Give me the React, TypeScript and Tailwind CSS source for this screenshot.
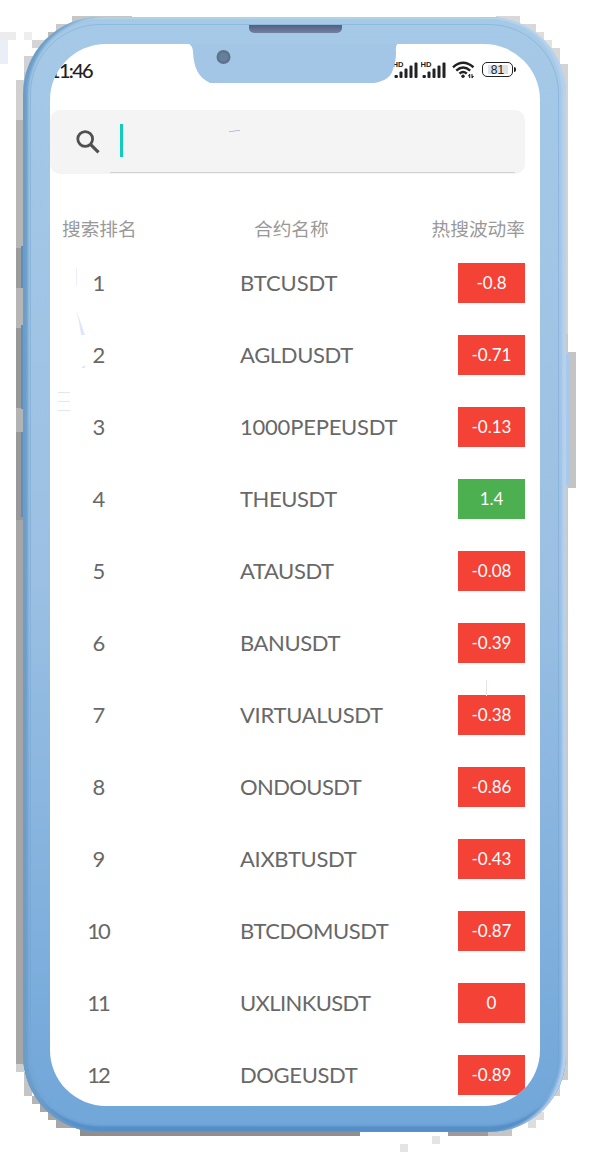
const rows = [
  { name: 'BTCUSDT', rate: '-0.8', track: 'tracking-[-0.1px]' },
  { name: 'AGLDUSDT', rate: '-0.71', track: 'tracking-[-0.36px]' },
  { name: '1000PEPEUSDT', rate: '-0.13', track: 'tracking-[-0.22px]' },
  { name: 'THEUSDT', rate: '1.4', track: 'tracking-[-0.4px]' },
  { name: 'ATAUSDT', rate: '-0.08', track: 'tracking-[-0.4px]' },
  { name: 'BANUSDT', rate: '-0.39', track: 'tracking-[-0.4px]' },
  { name: 'VIRTUALUSDT', rate: '-0.38', track: 'tracking-[-0.28px]' },
  { name: 'ONDOUSDT', rate: '-0.86', track: 'tracking-[-0.6px]' },
  { name: 'AIXBTUSDT', rate: '-0.43', track: 'tracking-[-0.33px]' },
  { name: 'BTCDOMUSDT', rate: '-0.87', track: 'tracking-[-0.45px]' },
  { name: 'UXLINKUSDT', rate: '0', track: 'tracking-[-0.6px]' },
  { name: 'DOGEUSDT', rate: '-0.89', track: 'tracking-[-0.36px]' },
];

/* x, y, width, height, fill */
const shadow: [number, number, number, number, string][] = [
  [0, 32, 16, 8, '#ececec'], [0, 40, 8, 24, '#e9eef7'], [24, 32, 8, 8, '#eeeeee'],
  [72, 16, 60, 8, '#c6c6c6'], [56, 24, 30, 8, '#c9c9c9'], [48, 32, 20, 8, '#bdbdbd'], [32, 40, 24, 8, '#d4d4d4'],
  [40, 48, 16, 8, '#bbbbbb'], [24, 56, 24, 16, '#d2d2d2'], [24, 72, 8, 20, '#c8c8c8'],
  [16, 80, 8, 40, '#d0d0d0'], [16, 120, 8, 128, '#b5b5b5'], [16, 248, 8, 40, '#9b9b9b'], [16, 288, 8, 40, '#b6b6b6'],
  [16, 328, 8, 80, '#979797'], [16, 408, 8, 24, '#b3b3b3'], [16, 432, 8, 88, '#989898'], [16, 520, 8, 544, '#a6a6a6'],
  [16, 1064, 8, 8, '#cfcfcf'], [24, 1072, 8, 24, '#c5c5c5'], [32, 1096, 8, 8, '#b5b5b5'], [40, 1104, 10, 8, '#a8a8a8'],
  [48, 1112, 16, 8, '#a8a8a8'], [56, 1120, 30, 8, '#a8a8a8'], [80, 1126, 280, 10, '#8f8f8f'], [448, 1126, 40, 10, '#9b9b9b'],
  [488, 1126, 24, 10, '#c5c5c5'], [432, 1136, 8, 8, '#e4e4e4'], [400, 1144, 8, 8, '#e4e4e4'],
  [496, 16, 24, 12, '#d8d8d8'], [512, 24, 24, 12, '#d8d8d8'], [528, 32, 16, 14, '#dddddd'], [540, 40, 12, 16, '#e2e2e2'],
  [546, 48, 14, 16, '#d8d8d8'], [560, 64, 8, 270, '#d3d3d3'], [560, 334, 8, 730, '#c9c9c9'], [568, 352, 8, 136, '#c4c4c4'],
  [560, 1064, 8, 16, '#cccccc'], [552, 1080, 8, 16, '#d0d0d0'], [536, 1112, 8, 8, '#dddddd'], [528, 1112, 8, 16, '#dddddd'],
];

function Backdrop() {
  return (
    <svg className="absolute inset-0" width="595" height="1154" shapeRendering="crispEdges">
      {shadow.map(([x, y, w, h, fill], i) => (
        <rect key={i} x={x} y={y} width={w} height={h} fill={fill} />
      ))}
      <rect x="21" y="246" width="3" height="42" fill="#5c8fbd" />
      <rect x="21" y="325" width="3" height="84" fill="#5c8fbd" />
      <rect x="21" y="432" width="3" height="85" fill="#5c8fbd" />
      <rect x="565" y="354" width="5" height="131" fill="#a9c9ec" />
    </svg>
  );
}

function Specks() {
  return (
    <svg className="pointer-events-none absolute inset-0" width="490" height="1062" viewBox="50 44 490 1062" fill="none">
      <path d="M58 392.5h12M58 401.5h12M58 410.5h12" stroke="#dfe8f4" />
      <path d="M76.5 268v18" stroke="#eceffa" />
      <path d="M76 310l3 12 2 13h4l-3-9z" fill="#dfe7f7" />
      <path d="M81 368l4-3v3z" fill="#dfe7f7" />
      <path d="M229 131.5h3l5-1h3" stroke="#a9afe0" strokeWidth="0.8" />
      <path d="M486.5 680v16" stroke="#e6e2e6" />
    </svg>
  );
}

function Notch() {
  return (
    <svg className="absolute left-0 top-0 h-[44px] w-[490px]" viewBox="50 44 490 44">
      <path d="M187 43Q193 45 193 52C194 68 198 77 210 83H374Q391 80 393 69Q396 62 396 52Q395 46 398 43H187Z" fill="#a3c5e6" />
      <circle cx="223.5" cy="57" r="7" fill="#5e7290" />
      <circle cx="223.5" cy="57" r="4.5" fill="#65809b" />
    </svg>
  );
}

function Signal() {
  return (
    <svg width="25" height="18" viewBox="0 0 25 18" fill="#222">
      <text x="-0.5" y="5.8" fontSize="7.6" fontWeight="700" fontFamily="Liberation Sans, sans-serif">HD</text>
      <rect x="1.5" y="14" width="3.4" height="3" rx="1" />
      <rect x="6.5" y="10.5" width="3" height="6.5" rx="1" />
      <rect x="11.5" y="7.5" width="3" height="9.5" rx="1" />
      <rect x="16.5" y="4.5" width="3" height="12.5" rx="1" />
      <rect x="21.5" y="1.5" width="3" height="15.5" rx="1" />
    </svg>
  );
}

function Wifi() {
  return (
    <svg width="23" height="18" viewBox="0 0 23 18" fill="none" stroke="#222" strokeWidth="2.5">
      <path d="M1 6.3Q11 -2.8 21.5 6.3" />
      <path d="M4.3 9.6Q11 3.5 18.2 9.6" />
      <path d="M7.5 12.6Q11 9.4 14.8 12.6" />
      <circle cx="11" cy="15.3" r="1.7" fill="#222" stroke="none" />
      <path d="M17.7 13v4.1M20 13v4.1" strokeWidth="1.1" />
      <path d="M15.6 15.2l2.1-2.4v2.4zM22.1 15L20 17.4V15z" fill="#222" stroke="none" />
    </svg>
  );
}

function Battery() {
  return (
    <div className="flex items-center">
      <div className="flex h-[15px] w-[31px] items-center justify-center rounded-[5px] border-[1.5px] border-[#222] p-[2px]">
        <span className="flex h-[9px] w-5 items-center justify-center bg-[#e2e2e2] font-['Liberation_Sans',sans-serif] text-[12px] leading-none text-[#222]">81</span>
      </div>
      <span className="ml-px h-[5px] w-[2px] rounded-r bg-[#222]" />
    </div>
  );
}

export default function App() {
  return (
    <main className="relative h-[1154px] w-[595px] overflow-hidden bg-white font-[Lato,'Noto_Sans_CJK_SC',sans-serif]">
      <Backdrop />
      <div className="relative ml-[23px] pt-[17px]">
        <div className="relative h-[1115px] w-[543px] rounded-[77px] bg-linear-to-b from-[#a5c9e7] via-[#9bc0e3] to-[#70a6d9] pt-[27px] pr-[26px] pl-[27px] shadow-[inset_6px_0_3px_-1px_#6c9dc8,inset_-6px_0_3px_-2px_#b7d2ef,inset_0_-7px_2px_-1px_#568fc8,inset_0_2px_1px_#b5d9ec]">
          <div className="pointer-events-none absolute inset-[7px] rounded-[70px] border border-[#6f9fcb]/40" />
          <div className="absolute top-[8px] left-[226px] h-[8px] w-[93px] rounded-b-[5px] bg-linear-to-b from-[#515f80] to-[#7580a2]" />
          <div className="relative h-[1062px] w-[490px] overflow-hidden rounded-[56px] bg-white">
            <header className="flex h-[51px] items-center justify-between pr-[24px]">
              <span className="-ml-px text-[20px] leading-none font-medium tracking-[-1.7px] text-[#222]">11:46</span>
              <div className="flex items-center">
                <div className="mr-[3px]"><Signal /></div>
                <div className="mr-[6px]"><Signal /></div>
                <div className="mr-[7px]"><Wifi /></div>
                <Battery />
              </div>
            </header>
            <Notch />
            <div className="mt-[15px] flex h-16 w-[475px] items-center rounded-[10px] bg-[#f4f4f5] pl-[26px]">
              <svg width="24" height="24" viewBox="0 0 24 24" fill="none" stroke="#505050" strokeWidth="2.8">
                <circle cx="9.2" cy="9" r="7.4" />
                <path d="M14.5 14.4l8 8" strokeWidth="3.2" />
              </svg>
              <div className="ml-[10px] flex h-full flex-1 flex-col justify-end pr-[10px]">
                <div className="mb-[15px] ml-[10px] h-[33px] w-[3px] bg-[#10cdbb]" />
                <div className="mb-px h-px bg-[#d2d2d2]" />
              </div>
            </div>
            <div className="flex h-[73px] items-center pt-[37px] pr-[15px] pl-[12px] text-[18.7px] leading-none text-[#999]">
              <span className="w-[192px]">搜索排名</span>
              <span>合约名称</span>
              <span className="ml-auto">热搜波动率</span>
            </div>
            {rows.map((r, i) => (
              <div key={r.name} className="flex h-[72px] items-center pr-[15px] text-[22px] leading-none text-[#686868]">
                <span className="mr-[2px] w-[96px] pb-px text-center tracking-[-2px]">{i + 1}</span>
                <span className={`pb-px pl-[92px] whitespace-nowrap ${r.track}`}>{r.name}</span>
                <span className={`ml-auto flex h-10 w-[67px] items-center justify-center pb-px text-[17px] text-white ${r.rate === '1.4' ? 'bg-[#4caf50]' : 'bg-[#f44336]'}`}>{r.rate}</span>
              </div>
            ))}
            <Specks />
          </div>
        </div>
      </div>
    </main>
  );
}
